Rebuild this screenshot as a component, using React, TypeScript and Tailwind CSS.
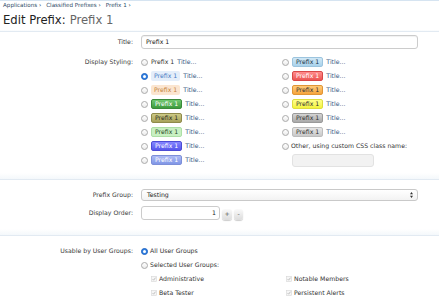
import React from 'react';

type Opt = { cls?: string; checked?: boolean };

const leftStyles: Opt[] = [
  {},
  { cls: 'bg-[#e4eefa] text-[#4a7cc4]', checked: true },
  { cls: 'bg-[#fbe5d0] text-[#c4833d]' },
  { cls: 'bg-linear-to-b from-[#70c870] to-[#3d9b3d] text-white border border-[#3a8a3a]' },
  { cls: 'bg-linear-to-b from-[#cdca86] to-[#a7a25a] text-[#2e2e1e] border border-[#8f8a4a]' },
  { cls: 'bg-[#c8f0c2] text-[#2c4a2c] border border-[#addfa6]' },
  { cls: 'bg-linear-to-b from-[#8585ff] to-[#5656ec] text-white border border-[#4c4cd4]' },
  { cls: 'bg-linear-to-b from-[#aebcf5] to-[#8096e6] text-white border border-[#7d8fd8]' },
];

const rightStyles: Opt[] = [
  { cls: 'bg-linear-to-b from-[#d0e8f6] to-[#a9d2eb] text-[#23364a] border border-[#9cc4de]' },
  { cls: 'bg-linear-to-b from-[#ff8c8c] to-[#ec5454] text-white border border-[#d84848]' },
  { cls: 'bg-linear-to-b from-[#ffcb78] to-[#f5a43a] text-[#333] border border-[#e09536]' },
  { cls: 'bg-linear-to-b from-[#ffff88] to-[#f3f33a] text-[#333] border border-[#dede40]' },
  { cls: 'bg-linear-to-b from-[#d4d4d4] to-[#a9a9a9] text-[#333] border border-[#9a9a9a]' },
  { cls: 'bg-linear-to-b from-[#e6e6e6] to-[#c9c9c9] text-[#333] border border-[#bdbdbd]' },
];

const Radio = ({ checked }: { checked?: boolean }) =>
  checked ? (
    <span className="flex h-[7px] w-[7px] shrink-0 items-center justify-center rounded-full border border-[#2566c2] bg-[#2f80e4]">
      <span className="h-[3px] w-[3px] rounded-full bg-white" />
    </span>
  ) : (
    <span className="h-[7px] w-[7px] shrink-0 rounded-full border border-[#aaaaaa] bg-linear-to-b from-white to-[#ebebeb]" />
  );

const Check = () => (
  <svg viewBox="0 0 6 6" className="h-[6px] w-[6px] shrink-0">
    <rect x="0.5" y="0.5" width="5" height="5" fill="#f6f6f6" stroke="#d6d6d6" strokeWidth="0.6" />
    <path d="M1.6 3.2 L2.6 4.2 L4.5 1.7" fill="none" stroke="#a8a8a8" strokeWidth="0.7" />
  </svg>
);

const StyleOption = ({ opt }: { opt: Opt }) => (
  <div className="flex h-[14px] items-center">
    <Radio checked={opt.checked} />
    {opt.cls ? (
      <span className={`ml-[3px] flex h-[10px] items-center rounded-[2px] px-[3px] leading-none ${opt.cls}`}>
        Prefix 1
      </span>
    ) : (
      <span className="ml-[3px] leading-none text-[#333]">Prefix 1</span>
    )}
    <span className="ml-[3px] leading-none text-[#3d5a86]">Title...</span>
  </div>
);

const Divider = ({ tall = true }: { tall?: boolean }) => (
  <div
    className={`${tall ? 'h-[7px]' : 'h-[2px]'} border-b border-[#e2eaf2] bg-linear-to-b from-white to-[#f4f8fb]`}
  />
);

const Label = ({ children }: { children: React.ReactNode }) => (
  <div className="flex h-[14px] w-[133px] shrink-0 items-center justify-end leading-none text-[#3a3a3a]">
    {children}
  </div>
);

const App = () => {
  return (
    <div className="h-[300px] w-[439px] overflow-hidden bg-white font-['DejaVu_Sans',sans-serif] text-[6.2px] text-[#333]">
      <div className="h-px bg-[#d6e4f1]" />
      <div className="flex h-[10px] items-center gap-[5px] pl-[3px] text-[5.6px] leading-none text-[#2c4a66]">
        <span>Applications ›</span>
        <span>Classified Prefixes ›</span>
        <span>Prefix 1 ›</span>
      </div>
      <h1 className="flex h-[19px] items-center pl-[3px] text-[11.6px] leading-none text-[#222]">
        Edit Prefix:<span className="ml-[4px] text-[#666]">Prefix 1</span>
      </h1>
      <Divider tall={false} />

      <div className="mt-[3px] flex gap-[8px]">
        <Label>Title:</Label>
        <div className="flex h-[14px] w-[277px] items-center rounded-[3px] border border-[#cccccc] bg-white pl-[4px] leading-none text-[#222] shadow-[inset_0_1px_1px_rgba(0,0,0,0.06)]">
          Prefix 1
        </div>
      </div>

      <div className="mt-[6px] flex gap-[8px]">
        <Label>Display Styling:</Label>
        <div className="grid grid-cols-[141px_1fr]">
          <div className="flex flex-col">
            {leftStyles.map((o, i) => (
              <StyleOption key={i} opt={o} />
            ))}
          </div>
          <div className="flex flex-col">
            {rightStyles.map((o, i) => (
              <StyleOption key={i} opt={o} />
            ))}
            <div className="flex h-[14px] items-center">
              <Radio />
              <span className="ml-[2px] leading-none text-[#333]">Other, using custom CSS class name:</span>
            </div>
            <div className="flex h-[14px] items-center pl-[10px]">
              <div className="h-[13px] w-[82px] rounded-[3px] border border-[#e2e2e2] bg-[#f2f2f2]" />
            </div>
          </div>
        </div>
      </div>

      <div className="mt-[6px]">
        <Divider />
      </div>

      <div className="mt-[8px] flex items-center gap-[8px]">
        <Label>Prefix Group:</Label>
        <div className="flex h-[12px] w-[277px] items-center justify-between rounded-[3px] border border-[#c9c9c9] bg-linear-to-b from-white to-[#f3f3f3] pl-[5px] pr-[4px] leading-none text-[#222]">
          <span>Testing</span>
          <svg viewBox="0 0 4 8" className="h-[6px] w-[3px]">
            <path d="M0 3 L2 0 L4 3 Z M0 5 L2 8 L4 5 Z" fill="#333" />
          </svg>
        </div>
      </div>

      <div className="mt-[4px] flex items-center gap-[8px]">
        <Label>Display Order:</Label>
        <div className="flex items-center">
          <div className="flex h-[14px] w-[79px] items-center justify-end rounded-[3px] border border-[#cccccc] bg-white pr-[3px] leading-none text-[#222]">
            1
          </div>
          <span className="ml-[2px] mt-[2px] flex h-[11px] w-[10px] items-center justify-center rounded-[3px] bg-linear-to-b from-[#fafafa] to-[#dcdcdc] leading-none text-[#555] shadow-[0_1px_1px_rgba(0,0,0,0.2)]">
            +
          </span>
          <span className="ml-[2px] mt-[2px] flex h-[11px] w-[9px] items-center justify-center rounded-[3px] bg-linear-to-b from-[#fafafa] to-[#dcdcdc] leading-none text-[#555] shadow-[0_1px_1px_rgba(0,0,0,0.2)]">
            -
          </span>
        </div>
      </div>

      <div className="mt-[9px]">
        <Divider />
      </div>

      <div className="mt-[8px] flex gap-[8px]">
        <Label>Usable by User Groups:</Label>
        <div className="flex flex-col">
          <div className="flex h-[14px] items-center">
            <Radio checked />
            <span className="ml-[2px] leading-none">All User Groups</span>
          </div>
          <div className="flex h-[14px] items-center">
            <Radio />
            <span className="ml-[2px] leading-none">Selected User Groups:</span>
          </div>
          <div className="grid grid-cols-[135px_1fr] pl-[10px]">
            {['Administrative', 'Notable Members', 'Beta Tester', 'Persistent Alerts'].map((g) => (
              <div key={g} className="flex h-[14px] items-center">
                <Check />
                <span className="ml-[2px] leading-none">{g}</span>
              </div>
            ))}
          </div>
        </div>
      </div>
    </div>
  );
};

export default App;
